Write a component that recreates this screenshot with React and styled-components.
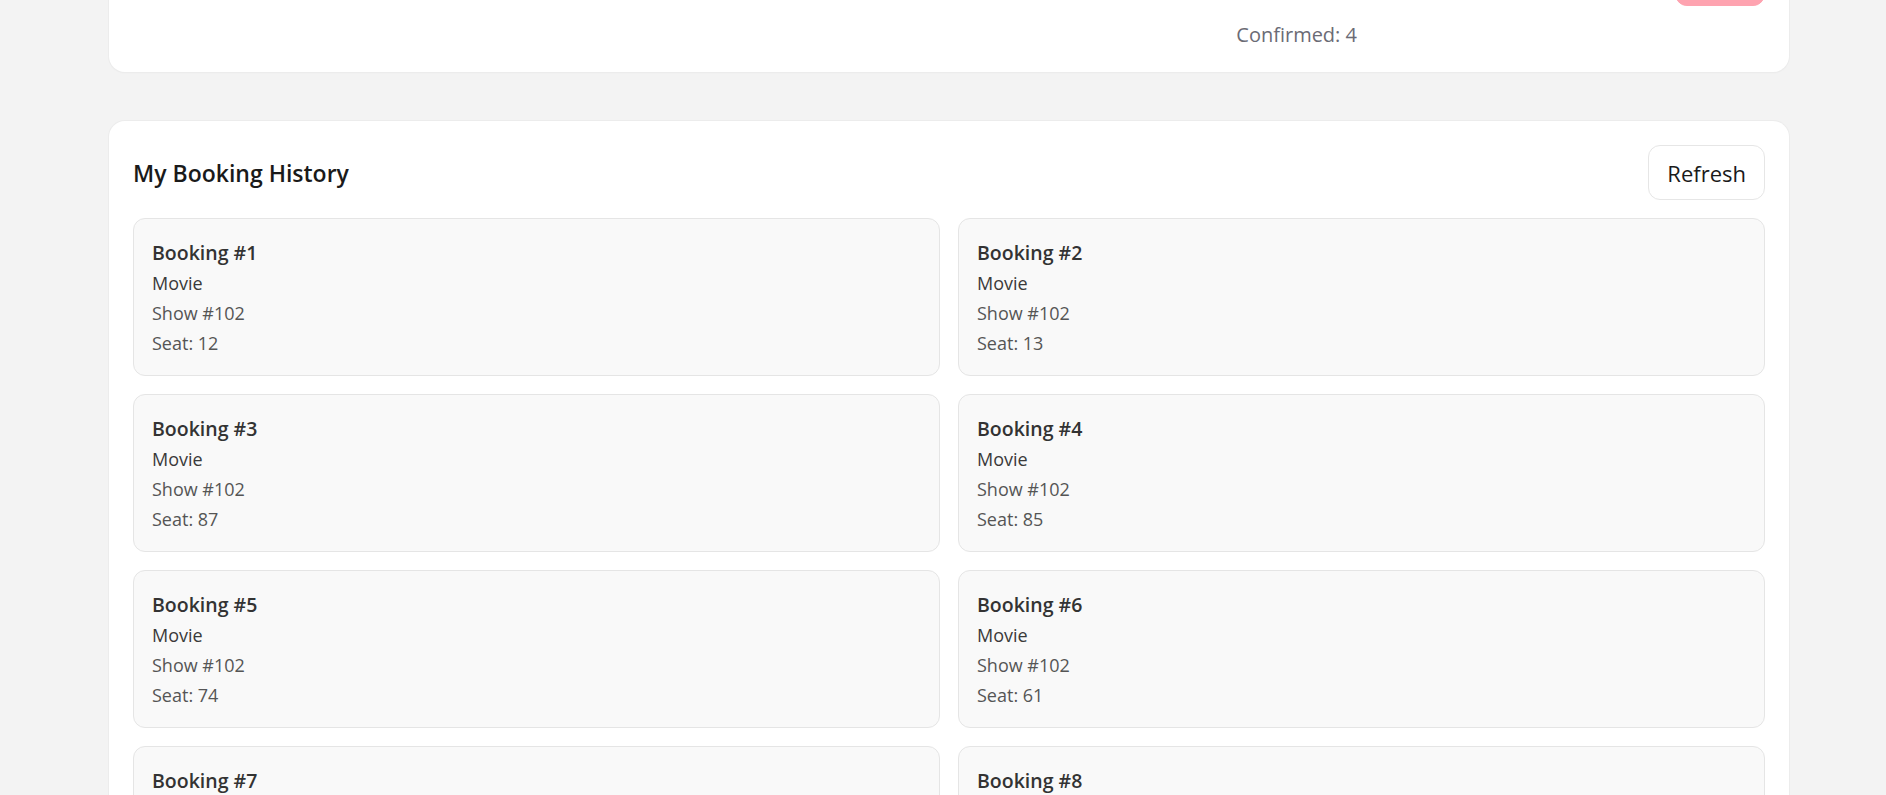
import React from 'react'
import styled, { createGlobalStyle } from 'styled-components'

const GlobalStyle = createGlobalStyle`
  * { box-sizing: border-box; }
  body {
    margin: 0;
    background: #f3f3f3;
    font-family: "Open Sans", "Noto Sans", sans-serif;
    color: #222;
  }
`;

// the page is shown scrolled down, so the top card sits partly above the fold
const Page = styled.div`
  width: 1680px;
  margin: -73px 0 0 109px;
  display: flex;
  flex-direction: column;
  gap: 49px;
  padding-bottom: 48px;
`;

const Card = styled.section`
  background: #fff;
  border-radius: 16px;
  padding: 24px 24px 22px;
  box-shadow: 0 0 0 1px #ececec, 0 1px 2px rgba(0, 0, 0, 0.04);
`;

const CardHeader = styled.div`
  display: flex;
  align-items: center;
  justify-content: space-between;
  margin-bottom: ${(props) => props.$space || 18}px;
`;

const Title = styled.h2`
  margin: 0;
  font-size: 23px;
  font-weight: 600;
  color: #1a1a1a;
`;

const Button = styled.button`
  height: 55px;
  padding: 0 18px;
  font-family: inherit;
  font-size: 22px;
  border-radius: 12px;
  cursor: pointer;
  border: 1px solid ${(props) => (props.$primary ? '#fea3b0' : '#e6e6e6')};
  background: ${(props) => (props.$primary ? '#fea3b0' : '#fff')};
  color: ${(props) => (props.$primary ? '#fff' : '#1a1a1a')};
`;

const Stats = styled.div`
  display: grid;
  grid-template-columns: repeat(4, 1fr);
  line-height: 30px;
  font-size: 20px;
  color: #6b6b75;
`;

const Stat = styled.div`
  grid-column: ${(props) => props.$col};
  text-align: right;
`;

const Grid = styled.div`
  display: grid;
  grid-template-columns: 1fr 1fr;
  gap: 18px;
`;

const Booking = styled.div`
  background: #f9f9f9;
  border: 1px solid #e5e5e5;
  border-radius: 12px;
  padding: 19px 18px 17px;
  font-size: 18px;
  line-height: 30px;
`;

const BookingTitle = styled.div`
  font-size: 19.5px;
  font-weight: 600;
  color: #333;
`;

const Line = styled.div`
  color: ${(props) => (props.$dim ? '#555' : '#3a3a3a')};
`;

const bookings = [
  { id: 1, show: 102, seat: 12 },
  { id: 2, show: 102, seat: 13 },
  { id: 3, show: 102, seat: 87 },
  { id: 4, show: 102, seat: 85 },
  { id: 5, show: 102, seat: 74 },
  { id: 6, show: 102, seat: 61 },
  { id: 7, show: 102, seat: 40 },
  { id: 8, show: 102, seat: 41 },
];

export default function App() {
  return (
    <>
      <GlobalStyle />
      <Page>
        <Card>
          <CardHeader $space={14}>
            <Title>Book a Seat</Title>
            <Button $primary>Book</Button>
          </CardHeader>
          <Stats>
            <Stat $col={3}>Confirmed: 4</Stat>
          </Stats>
        </Card>

        <Card>
          <CardHeader>
            <Title>My Booking History</Title>
            <Button>Refresh</Button>
          </CardHeader>
          <Grid>
            {bookings.map((b) => (
              <Booking key={b.id}>
                <BookingTitle>Booking #{b.id}</BookingTitle>
                <Line>Movie</Line>
                <Line $dim>Show #{b.show}</Line>
                <Line $dim>Seat: {b.seat}</Line>
              </Booking>
            ))}
          </Grid>
        </Card>
      </Page>
    </>
  )
}
